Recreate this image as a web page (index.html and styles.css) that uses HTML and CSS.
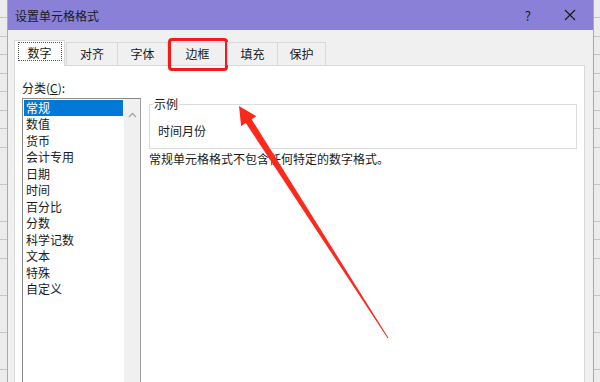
FILE: index.html
```html
<!DOCTYPE html>
<html lang="zh-CN">
<head>
    <meta charset="UTF-8">
    <title>设置单元格格式</title>
    <link rel="stylesheet" href="styles.css">
</head>
<body>
    <div class="screen">
        <div class="sheet-edge left"></div>

        <div class="dialog">
            <div class="titlebar">
                <span class="title">设置单元格格式</span>
                <span class="help">?</span>
                <svg class="close" width="12" height="12" viewBox="0 0 12 12">
                    <path d="M1 1 L11 11 M11 1 L1 11" stroke="#1a1a1a" stroke-width="1.2" fill="none"/>
                </svg>
            </div>

            <div class="body">
                <div class="tabs">
                    <div class="tab active"><span class="focus">数字</span></div>
                    <div class="tab t2">对齐</div>
                    <div class="tab t3">字体</div>
                    <div class="tab t4">边框<span class="mark"></span></div>
                    <div class="tab t5">填充</div>
                    <div class="tab t6">保护</div>
                </div>

                <div class="panel">
                    <div class="left-col">
                        <div class="label">分类(<u>C</u>):</div>
                        <div class="listbox">
                            <ul class="items">
                                <li class="selected">常规</li>
                                <li>数值</li>
                                <li>货币</li>
                                <li>会计专用</li>
                                <li>日期</li>
                                <li>时间</li>
                                <li>百分比</li>
                                <li>分数</li>
                                <li>科学记数</li>
                                <li>文本</li>
                                <li>特殊</li>
                                <li>自定义</li>
                            </ul>
                            <div class="scrollbar">
                                <svg width="9" height="6" viewBox="0 0 9 6">
                                    <path d="M1 5 L4.5 1.5 L8 5" stroke="#a6a6a6" stroke-width="1.3" fill="none"/>
                                </svg>
                            </div>
                        </div>
                    </div>

                    <div class="right-col">
                        <fieldset class="sample">
                            <legend>示例</legend>
                            <div class="sample-value">时间月份</div>
                        </fieldset>
                        <p class="desc">常规单元格格式不包含任何特定的数字格式。</p>
                    </div>
                </div>
            </div>
        </div>

        <div class="sheet-edge right"></div>
    </div>

    <!-- 标注箭头 -->
    <svg class="arrow" width="600" height="382" viewBox="0 0 600 382">
        <polygon points="239,106 256.3,116.2 251.6,119.2 388.4,337.7 387.6,338.3 245.8,123 241.1,126" fill="#fb2a1d"/>
    </svg>
</body>
</html>
```

FILE: styles.css
```css
body {
    margin: 0;
    font-family: "Noto Sans CJK SC", "Noto Sans", sans-serif;
    font-size: 12px;
    color: #1a1a1a;
    overflow: hidden;
}

.screen {
    display: flex;
    width: 600px;
    height: 382px;
    overflow: hidden;
}

.sheet-edge {
    background: repeating-linear-gradient(to bottom, #ececec 0, #ececec 17.5px, #c6c6c6 17.5px, #c6c6c6 18.5px);
}

.sheet-edge.left {
    width: 7px;
}

.sheet-edge.right {
    width: 6px;
}

.dialog {
    flex: 1;
    display: flex;
    flex-direction: column;
    overflow: hidden;
    border-left: 1px solid #a79fe6;
    border-right: 1px solid #a79fe6;
    background: #f0f0f0;
}

.titlebar {
    flex: none;
    display: flex;
    align-items: center;
    height: 30px;
    background: #8a80d7;
    padding-left: 7px;
}

.title {
    flex: 1;
}

.help {
    font-size: 13px;
    margin-right: 33px;
}

.close {
    margin-right: 17px;
}

.body {
    flex: none;
    padding: 10px 8px 0 6px;
}

.tabs {
    display: flex;
    align-items: flex-end;
    height: 25px;
}

.tab {
    position: relative;
    box-sizing: border-box;
    height: 23px;
    line-height: 22px;
    text-align: center;
    border: 1px solid #d9d9d9;
    border-bottom: none;
    margin-left: -1px;
}

.tab.active {
    width: 51px;
    height: 26px;
    margin: 0 2px -1px 0;
    background: #fff;
    z-index: 1;
    padding-top: 1px;
}

.focus {
    display: inline-block;
    width: 44px;
    height: 19px;
    line-height: 19px;
    border: 1px dotted #555;
    box-sizing: border-box;
}

.t2 { width: 52px; }
.t3 { width: 51px; }
.t4 { width: 61px; }
.t5 { width: 51px; }
.t6 { width: 49px; }

.mark {
    position: absolute;
    top: -5px;
    bottom: -6px;
    left: 0;
    right: -1px;
    border: 3px solid #f4191b;
    border-radius: 4px;
}

.panel {
    display: flex;
    gap: 8px;
    height: 330px;
    background: #fff;
    border: 1px solid #d9d9d9;
    padding: 0 6px 0 7px;
}

.left-col {
    width: 119px;
}

.label {
    margin-top: 13px;
    height: 19px;
}

.listbox {
    display: flex;
    height: 300px;
    border: 1px solid #8a8a8a;
    border-right-color: #a0a0a0;
}

.items {
    flex: 1;
    list-style: none;
    margin: 0;
    padding: 1px 1px 0;
}

.items li {
    line-height: 16.45px;
    padding-left: 2px;
}

.items li.selected {
    background: #0078d7;
    color: #fff;
}

.scrollbar {
    width: 16px;
    background: #f0f0f0;
    text-align: center;
    padding-top: 5px;
}

.right-col {
    flex: 1;
    padding-right: 1px;
}

.sample {
    margin: 31px 0 0;
    padding: 0 8px;
    height: 52px;
    box-sizing: border-box;
    border: 1px solid #dcdcdc;
}

.sample legend {
    padding: 0 1px;
    margin-left: -5px;
    line-height: 14px;
}

.sample-value {
    line-height: 16px;
    margin-top: 12px;
}

.desc {
    margin: 2px 0 0;
    line-height: 16px;
}

.arrow {
    position: absolute;
    left: 0;
    top: 0;
    pointer-events: none;
}
```
